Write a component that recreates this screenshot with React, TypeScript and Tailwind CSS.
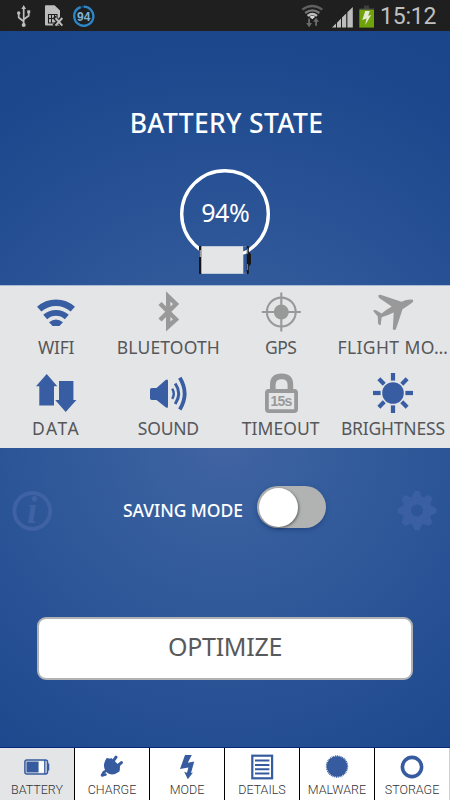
import type { ReactNode } from 'react';
import clsx from 'clsx';

const SANS = "font-['Noto_Sans','Open_Sans',sans-serif]";

interface IconProps {
  className?: string;
  children: ReactNode;
}

const Icon = ({ className, children }: IconProps) => (
  <svg viewBox="0 0 40 40" className={clsx('block h-10 w-10 shrink-0 overflow-visible', className)} fill="currentColor">
    {children}
  </svg>
);

const TabIcon = ({ children }: IconProps) => (
  <svg viewBox="0 0 30 30" className="block h-[30px] w-[30px] shrink-0 text-[#365c9f]" fill="currentColor">
    {children}
  </svg>
);

const RAYS = [0, 45, 90, 135, 180, 225, 270, 315];

const WifiIcon = (
  <g fill="none" stroke="currentColor">
    <path d="M3.2 17.2A25 25 0 0 1 36.8 17.2" strokeWidth="6.4" />
    <path d="M9.2 25A16 16 0 0 1 30.8 25" strokeWidth="5.8" />
    <path d="M13 30.2Q20 24.6 27 30.2L23.4 34H16.6Z" fill="currentColor" stroke="none" />
  </g>
);

const BluetoothIcon = (
  <path d="M12 11.5L28 27.5L20.2 34.5V4.5L28 12L12 28" fill="none" stroke="currentColor" strokeWidth="4.4" />
);

const GpsIcon = (
  <>
    <circle cx="20.3" cy="20" r="14.4" fill="none" stroke="currentColor" strokeWidth="2.1" />
    <circle cx="20.3" cy="20" r="7.5" />
    <path d="M20.3 .5V39.5M.8 20H39.8" stroke="currentColor" strokeWidth="2.1" />
  </>
);

const FlightIcon = (
  <path d="M5.3 3.3Q7 2.5 9 3.2L28.5 9.8Q35 6.8 40 7.8Q41 10 37 12.2L29.5 17.2Q26 28 22.8 37.6Q21 38.5 19.8 37.2L20.7 20.5Q14 23.8 8.7 25.2L7.6 33.3Q5.5 33.2 5 31.2L4.8 24.4L0 18.8Q1.5 17.6 3 18.2L8.6 21.4Q13 18 18.7 14.6L5.8 5.8Z" />
);

const DataIcon = (
  <>
    <path d="M10.7 1L21.3 13.2H18V32.5H3.3V13.2H0Z" />
    <path d="M23 8H37.4V27H40.4L29.7 39L19.2 27H23Z" />
  </>
);

const SoundIcon = (
  <>
    <path d="M3.8 15H8.5L17 7.4Q20 5.2 20 8V33Q20 36.3 17 33.8L8.5 27H3.8Q2 27 2 25.2V16.8Q2 15 3.8 15Z" />
    <g fill="none" stroke="currentColor">
      <path d="M24.2 15.6Q27.3 20.6 24.2 25.8" strokeWidth="2.4" />
      <path d="M27.2 10.5Q34.2 20.6 27.2 31" strokeWidth="3" />
      <path d="M31.8 4.8Q41.5 20.6 31.8 36.6" strokeWidth="3.8" />
    </g>
  </>
);

const TimeoutIcon = (
  <>
    <path d="M11.8 19V11.5Q12 3.4 20.6 3.4T29.4 11.5V19" fill="none" stroke="currentColor" strokeWidth="5.6" />
    <rect x="5.9" y="18" width="29.2" height="20.1" rx="2" fill="#e4e5e7" stroke="currentColor" strokeWidth="3.8" />
    <text x="20.4" y="33.4" textAnchor="middle" textLength="22" className="font-['Liberation_Sans',sans-serif] text-[14px] font-bold">15s</text>
  </>
);

const BrightnessIcon = (
  <>
    <circle cx="20" cy="20" r="10.8" />
    {RAYS.map((angle) => (
      <rect key={angle} x="17.9" y="0" width="4.2" height="7.6" transform={`rotate(${angle} 20 20)`} />
    ))}
  </>
);

const settings = [
  { label: 'WIFI', icon: WifiIcon, on: true, tracking: 'tracking-[-0.2px]' },
  { label: 'BLUETOOTH', icon: BluetoothIcon, on: false, tracking: 'tracking-[0.15px]' },
  { label: 'GPS', icon: GpsIcon, on: false, tracking: 'tracking-[-0.5px]' },
  { label: 'FLIGHT MO…', icon: FlightIcon, on: false, tracking: 'tracking-[0.4px]' },
  { label: 'DATA', icon: DataIcon, on: true, tracking: 'tracking-[1.5px]' },
  { label: 'SOUND', icon: SoundIcon, on: true, tracking: 'tracking-[-0.2px]' },
  { label: 'TIMEOUT', icon: TimeoutIcon, on: false, tracking: 'tracking-[0.05px]' },
  { label: 'BRIGHTNESS', icon: BrightnessIcon, on: true, tracking: 'tracking-[-0.2px]' },
];

const tabs = [
  {
    label: 'BATTERY',
    icon: (
      <>
        <rect x="2.9" y="8" width="22.6" height="14" rx="2" fill="none" stroke="currentColor" strokeWidth="1.5" />
        <rect x="4.5" y="9.6" width="12" height="10.8" />
        <path d="M22.8 8V22M26.6 11.5V18.5" stroke="currentColor" strokeWidth="1.3" />
        <rect x="17" y="9.6" width="5" height="10.8" fill="#fff" />
      </>
    ),
  },
  {
    label: 'CHARGE',
    icon: (
      <>
        <path d="M9.8 5.8L12.5 7L22.8 16.8L22.4 19.5Q15.5 24.8 9.8 20.6Q4 14.5 9.8 5.8Z" />
        <path d="M11 6.8L14.8 6.2L23.2 14.5L22 19.5Z" />
        <path d="M16 9.5L19 5.2M20.5 14L24.4 10.6" fill="none" stroke="currentColor" strokeWidth="3" strokeLinecap="round" />
        <path d="M9.5 18.5L6.6 20.4L5 23.4L8.5 22.5" fill="none" stroke="currentColor" strokeWidth="2.6" strokeLinecap="round" strokeLinejoin="round" />
      </>
    ),
  },
  {
    label: 'MODE',
    icon: <path d="M13 3H19.8L15.8 10.7L22.2 9.6L19 21L21 20.6L15.8 27.2L12.2 19.8L15 20.8L16.4 15.5L8 17Z" />,
  },
  {
    label: 'DETAILS',
    icon: (
      <>
        <rect x="5.3" y="3.7" width="19.8" height="22.6" fill="none" stroke="currentColor" strokeWidth="2.2" />
        <path d="M8 8.6H22.4M8 13H22.4M8 17.2H22.4M8 21.5H22.4" stroke="currentColor" strokeWidth="2" />
      </>
    ),
  },
  {
    label: 'MALWARE',
    icon: (
      <>
        <circle cx="15" cy="14.5" r="10.3" />
        <circle cx="15" cy="14.5" r="10.4" fill="none" stroke="currentColor" strokeWidth="1.6" strokeDasharray="1 .8" />
      </>
    ),
  },
  {
    label: 'STORAGE',
    icon: <circle cx="15" cy="15" r="9.6" fill="none" stroke="currentColor" strokeWidth="3.6" />,
  },
];

const StatusBar = () => (
  <header className="flex h-[31px] shrink-0 items-center bg-[#1f1f1f] text-[#bdbdbd]">
    <svg viewBox="0 0 110 31" className="block h-[31px] w-[110px]" fill="currentColor">
      {/* USB */}
      <g fill="none" stroke="currentColor" strokeWidth="1.7">
        <path d="M23.7 7V25M18.7 13.5V17.5L23.7 21.5M28.7 12V15.8L23.7 19.5" />
      </g>
      <path d="M23.7 5L26 9H21.4Z" />
      <circle cx="23.7" cy="25" r="2" />
      <circle cx="18.7" cy="13" r="1.7" />
      <rect x="27.2" y="10.3" width="3" height="3" />
      {/* SIM card */}
      <path d="M45 6Q45 5.2 46 5.2H54.5L60 10.5V18L57 21L61 25.5H46Q45 25.5 45 24.6Z" />
      <path d="M48.5 14.5H57V23H48.5ZM48.5 18.5H57M51.5 14.5V23M54.5 14.5V19" fill="none" stroke="#1f1f1f" strokeWidth="1.1" />
      <path d="M54 17L62.5 26M62.5 17L54 26" stroke="#1f1f1f" strokeWidth="4" />
      <path d="M55.5 18L62.3 25.6M62.3 18L55.5 25.6" stroke="currentColor" strokeWidth="2" />
      {/* Battery percentage */}
      <circle cx="83.8" cy="16.2" r="9.6" fill="none" stroke="#173e5c" strokeWidth="2.2" />
      <circle cx="83.8" cy="16.2" r="9.6" fill="none" stroke="#2e86c8" strokeWidth="2.2" strokeDasharray="56.7 60.3" transform="rotate(-90 83.8 16.2)" />
      <text x="83.8" y="20.6" textAnchor="middle" fill="#7cb5d8" className="font-['Liberation_Sans',sans-serif] text-[12px] font-bold">94</text>
    </svg>
    <svg viewBox="295 0 80 31" className="ml-auto block h-[31px] w-20" fill="currentColor">
      {/* Wifi */}
      <g fill="none" stroke="#606060" strokeWidth="2.3">
        <path d="M302.3 9.6Q312.3 2.4 322.3 9.6" />
        <path d="M305.2 13Q312.3 7.8 319.4 13" stroke="#777" />
        <path d="M307.6 15.8Q312.3 12.2 317 15.8" stroke="#bdbdbd" />
      </g>
      <path d="M309.4 16.8Q312.3 14.8 315.2 16.8L312.3 19.2Z" fill="#d8d8d8" />
      <path d="M308.2 18.5H310V23H312L309.1 27.2L306.2 23H308.2ZM315.2 25.8H317V21.8H319L316.1 17.8L313.2 21.8H315.2Z" fill="#6c6c6c" />
      {/* Signal */}
      <path d="M332 27.5L336 23.5V27.5ZM337 22.7L341 18.5V27.5H337ZM342 17.6L346.2 13.4V27.5H342ZM347.4 12.2L352.8 7V27.5H347.4Z" />
      {/* Charging battery */}
      <path d="M364 5.5H369V9H364Z" fill="#3e3e3e" />
      <path d="M359.5 8.5H374V10H359.5Z" fill="#4a4a4a" />
      <path d="M359.3 9.8H374V27.6H359.3Z" fill="#70a20a" />
      <path d="M365.2 11H369.8L368.2 15.8L371.2 15L365.2 25L366.5 18.5L362.3 20Z" fill="#e4ead5" />
    </svg>
    <span className="w-[75px] pt-[2px] pl-[5px] font-[Roboto,sans-serif] text-[23px] leading-[29px] tracking-[-0.2px] text-[#c0c0c0]">15:12</span>
  </header>
);

const BatteryState = () => (
  <section className="flex h-[254px] shrink-0 flex-col items-center pt-[76px]">
    <h1 className={`${SANS} ml-[3px] h-8 text-[26.5px] leading-8 font-medium tracking-[0.3px] whitespace-nowrap text-white`}>BATTERY STATE</h1>
    <svg viewBox="175 165 100 115" className="mt-[26px] block h-[115px] w-[100px]">
      <circle cx="225" cy="214" r="43.3" fill="none" stroke="#fff" strokeWidth="3.4" />
      <rect x="243" y="254.5" width="6" height="19" fill="#31589b" />
      <rect x="199" y="246" width="3" height="28" rx="1" fill="#151515" />
      <rect x="199.5" y="250" width="1.6" height="7" fill="#9a9a9a" />
      <rect x="201.3" y="246.2" width="42" height="27.6" fill="#e4e5e7" />
      <path d="M243.5 246.2H249V249L243.5 251Z" fill="#31589b" />
      <path d="M243 246.6H249M243 273.2H249" stroke="#7187ad" strokeWidth=".8" />
      <path d="M246.8 246H248.8V251.5L251 254.5V264L248.8 266.5V274H246.8Z" fill="#161616" />
      <path d="M247.6 248.5V254M247.6 264V270" stroke="#8a8a8a" strokeWidth=".9" />
      <text x="225.5" y="222.2" textAnchor="middle" textLength="48.5" fill="#fff" className={`${SANS} text-[25px]`}>94%</text>
    </svg>
  </section>
);

const SettingsGrid = () => (
  <section className="grid h-[163px] shrink-0 grid-cols-4 grid-rows-[81px_82px] border-t border-[#aabbd5] bg-[#e4e5e7] pr-[1px]">
    {settings.map((item) => (
      <button key={item.label} className="flex min-w-0 flex-col items-center pt-[6px]">
        <Icon className={item.on ? 'text-[#385da2]' : 'text-[#999]'}>{item.icon}</Icon>
        <span className={`${SANS} ${item.tracking} mt-[3px] text-[17.5px] leading-6 whitespace-nowrap text-[#55575a]`}>{item.label}</span>
      </button>
    ))}
  </section>
);

const SavingMode = () => (
  <section className="flex h-[299px] shrink-0 flex-col items-center">
    <div className="mt-[37px] flex h-[52px] w-full items-center pr-[12px] pl-[12px]">
      <Icon className="text-[#3e62a3]">
        <circle cx="20.3" cy="20" r="17.9" fill="none" stroke="currentColor" strokeWidth="4" />
        <text x="20.2" y="32.3" textAnchor="middle" className="font-['Liberation_Serif',serif] text-[37px] font-bold italic">i</text>
      </Icon>
      <span className={`${SANS} mb-[2px] ml-[71px] w-[122px] text-[17.5px] leading-6 font-medium tracking-[-0.05px] whitespace-nowrap text-white`}>SAVING MODE</span>
      <button className="mb-[8px] ml-[12px] flex h-[42px] w-[69px] items-center rounded-full bg-[#b1b3b2] pl-[2px] shadow-[0_2px_5px_rgba(20,50,110,0.5)]">
        <span className="h-[39px] w-[39px] rounded-full bg-white shadow-[1px_1px_3px_rgba(0,0,0,0.45)]" />
      </button>
      <Icon className="ml-auto text-[#3a5fa2]">
        <circle cx="19" cy="19.5" r="10.4" fill="none" stroke="currentColor" strokeWidth="8.8" />
        {RAYS.map((angle) => (
          <path key={angle} d="M13.2 7.5L16.4 .3Q19 -.7 21.6 .3L24.8 7.5Z" transform={`rotate(${angle} 19 19.5)`} />
        ))}
      </Icon>
    </div>
    <button className={`${SANS} mt-[80px] h-[63px] w-[376px] rounded-[9px] border-2 border-[#b0b2b4] bg-white pb-[3px] text-[25px] tracking-[-0.3px] text-[#58595b]`}>
      OPTIMIZE
    </button>
  </section>
);

const TabBar = () => (
  <nav className="grid h-[53px] shrink-0 grid-cols-6 border-t border-[#06277a] bg-white">
    {tabs.map((tab, i) => (
      <button
        key={tab.label}
        className={clsx(
          'flex flex-col items-center border-r pt-[4px]',
          i === 0 ? 'bg-[#e4e5e7]' : 'bg-white',
          i === tabs.length - 1 ? 'border-[#d0d0d0]' : 'border-black',
        )}
      >
        <TabIcon>{tab.icon}</TabIcon>
        <span className="font-[Roboto,sans-serif] text-[12.5px] leading-[15px] font-light whitespace-nowrap text-[#333]">{tab.label}</span>
      </button>
    ))}
  </nav>
);

const App = () => (
  <main className="flex h-[800px] w-[450px] flex-col overflow-hidden bg-[radial-gradient(circle_at_50%_55%,#4263a2_0px,#375f9e_90px,#2b5497_230px,#1c478c_400px,#19458b_480px)]">
    <StatusBar />
    <BatteryState />
    <SettingsGrid />
    <SavingMode />
    <TabBar />
  </main>
);

export default App;
